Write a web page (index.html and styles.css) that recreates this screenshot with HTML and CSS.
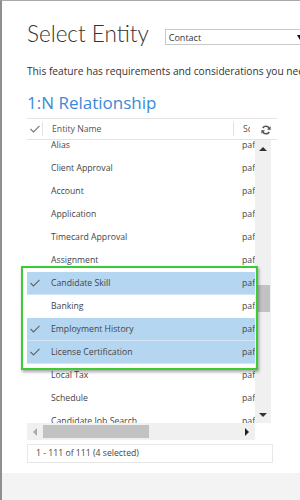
FILE: index.html
```html
<!DOCTYPE html>
<html lang="en">
<head>
  <meta charset="UTF-8">
  <meta name="viewport" content="width=device-width, initial-scale=1.0">
  <title>Select Entity</title>
  <link rel="stylesheet" href="styles.css">
</head>
<body>
  <div class="frame">
    <div class="page">
      <div class="title-row">
        <h1 class="title">Select Entity</h1>
        <div class="entity-select">
          <span>Contact</span>
          <span class="caret"></span>
        </div>
      </div>
      <p class="note">This feature has requirements and considerations you need to review before enabling it.</p>
      <h2 class="section">1:N Relationship</h2>

      <div class="grid">
        <div class="grid-head">
          <div class="cell-check">
            <svg width="10" height="8" viewBox="0 0 10 8"><polyline points="0.5,4 3.5,7 9.5,0.8" fill="none" stroke="#777" stroke-width="1.1"/></svg>
          </div>
          <div class="head-name">Entity Name</div>
          <div class="head-schema">Schema Name</div>
          <div class="head-refresh">
            <svg width="10" height="10" viewBox="0 0 10 10">
              <path d="M8.3 3.6 A3.6 3.6 0 0 0 1.8 3" fill="none" stroke="#555" stroke-width="1.5"/>
              <path d="M1.7 6.4 A3.6 3.6 0 0 0 8.2 7" fill="none" stroke="#555" stroke-width="1.5"/>
              <polygon points="9.6,1.2 9.6,5 5.9,4.4" fill="#555"/>
              <polygon points="0.4,8.8 0.4,5 4.1,5.6" fill="#555"/>
            </svg>
          </div>
        </div>

        <div class="grid-body">
          <div class="rows-view">
            <div class="rows">
              <div class="row"><div class="cell-check"></div><div class="cell-name">Alias</div><div class="cell-schema">paf_alias</div></div>
              <div class="row"><div class="cell-check"></div><div class="cell-name">Client Approval</div><div class="cell-schema">paf_clientapproval</div></div>
              <div class="row"><div class="cell-check"></div><div class="cell-name">Account</div><div class="cell-schema">paf_account</div></div>
              <div class="row"><div class="cell-check"></div><div class="cell-name">Application</div><div class="cell-schema">paf_application</div></div>
              <div class="row"><div class="cell-check"></div><div class="cell-name">Timecard Approval</div><div class="cell-schema">paf_timecardapproval</div></div>
              <div class="row"><div class="cell-check"></div><div class="cell-name">Assignment</div><div class="cell-schema">paf_assignment</div></div>
              <div class="row selected"><div class="cell-check"><svg width="10" height="8" viewBox="0 0 10 8"><polyline points="0.5,4 3.5,7 9.5,0.8" fill="none" stroke="#666" stroke-width="1.1"/></svg></div><div class="cell-name">Candidate Skill</div><div class="cell-schema">paf_candidateskill</div></div>
              <div class="row"><div class="cell-check"></div><div class="cell-name">Banking</div><div class="cell-schema">paf_banking</div></div>
              <div class="row selected"><div class="cell-check"><svg width="10" height="8" viewBox="0 0 10 8"><polyline points="0.5,4 3.5,7 9.5,0.8" fill="none" stroke="#666" stroke-width="1.1"/></svg></div><div class="cell-name">Employment History</div><div class="cell-schema">paf_employmenthistory</div></div>
              <div class="row selected"><div class="cell-check"><svg width="10" height="8" viewBox="0 0 10 8"><polyline points="0.5,4 3.5,7 9.5,0.8" fill="none" stroke="#666" stroke-width="1.1"/></svg></div><div class="cell-name">License Certification</div><div class="cell-schema">paf_licensecertification</div></div>
              <div class="row"><div class="cell-check"></div><div class="cell-name">Local Tax</div><div class="cell-schema">paf_localtax</div></div>
              <div class="row"><div class="cell-check"></div><div class="cell-name">Schedule</div><div class="cell-schema">paf_schedule</div></div>
              <div class="row"><div class="cell-check"></div><div class="cell-name">Candidate Job Search</div><div class="cell-schema">paf_candidatejobsearch</div></div>
            </div>
          </div>
          <div class="vscroll">
            <div class="scroll-btn"><span class="arrow-up"></span></div>
            <div class="vtrack"><div class="vthumb"></div></div>
            <div class="scroll-btn"><span class="arrow-down"></span></div>
          </div>
        </div>

        <div class="hscroll">
          <div class="hbtn"><span class="arrow-left"></span></div>
          <div class="htrack"><div class="hthumb"></div></div>
          <div class="hbtn"><span class="arrow-right"></span></div>
        </div>

        <div class="grid-foot">1 - 111 of 111 (4 selected)</div>
      </div>
    </div>
    <div class="bottom-bar"></div>
    <div class="callout"></div>
  </div>
</body>
</html>
```

FILE: styles.css
```css
html, body {
  margin: 0;
  height: 100%;
  overflow: hidden;
}
body {
  font-family: "Open Sans", "Noto Sans", sans-serif;
  color: #444;
  background: #fff;
}
.frame {
  position: relative;
  height: 499px;
  border-top: 1px solid #a9a9a9;
  border-left: 2px solid #8f8f8f;
  overflow: hidden;
}
.page {
  padding: 18px 0 0 25px;
  height: 454px;
}
.title-row {
  display: flex;
  align-items: flex-start;
  white-space: nowrap;
}
.title {
  margin: 0;
  font-family: Lato, "Open Sans", sans-serif;
  font-weight: 300;
  font-size: 22.5px;
  line-height: 30px;
  color: #333;
}
.entity-select {
  margin: 10px 0 0 16px;
  width: 136px;
  height: 14px;
  flex-shrink: 0;
  border: 1px solid #c9c9c9;
  border-right: none;
  display: flex;
  align-items: center;
  justify-content: space-between;
  padding-left: 3px;
  font-size: 9px;
  color: #333;
}
.caret {
  width: 0;
  height: 0;
  border-left: 3px solid transparent;
  border-right: 3px solid transparent;
  border-top: 5px solid #111;
  margin-right: 2px;
}
.note {
  margin: 15px 0 0;
  font-size: 10.2px;
  line-height: 14px;
  white-space: nowrap;
  color: #333;
}
.section {
  margin: 13px 0 0;
  font-weight: 400;
  font-size: 17px;
  line-height: 24px;
  color: #3a8ad8;
}
.grid {
  margin-top: 3px;
  width: 246px;
  font-size: 8.7px;
}
.grid-head {
  display: flex;
  align-items: center;
  height: 20px;
  width: 250px;
  border-top: 1px solid #e3e3e3;
  border-bottom: 1px solid #e3e3e3;
  color: #555;
}
.cell-check {
  width: 15px;
  flex-shrink: 0;
  display: flex;
  justify-content: center;
  align-items: center;
}
.head-name {
  width: 181px;
  height: 14px;
  padding-left: 9px;
  line-height: 14px;
  border-left: 1px solid #e3e3e3;
  border-right: 1px solid #e3e3e3;
}
.head-schema {
  width: 7px;
  padding-left: 9px;
  overflow: hidden;
  white-space: nowrap;
}
.head-refresh {
  margin-left: 7px;
  width: 18px;
  display: flex;
  justify-content: center;
  padding-top: 2px;
}
.grid-body {
  display: flex;
  height: 283px;
}
.rows-view {
  width: 228px;
  overflow: hidden;
}
.rows {
  margin-top: -6px;
}
.row {
  display: flex;
  align-items: center;
  height: 22px;
  border-bottom: 1px solid #fff;
  white-space: nowrap;
}
.row.selected {
  background: #b4d6f1;
  border-bottom-color: #d4e6f5;
}
.cell-name {
  width: 182px;
  flex-shrink: 0;
  padding-left: 9px;
}
.cell-schema {
  padding-left: 9px;
}
.vscroll {
  width: 16px;
  background: #f0f0f0;
  display: flex;
  flex-direction: column;
}
.scroll-btn {
  height: 17px;
  display: flex;
  align-items: center;
  justify-content: center;
}
.vtrack {
  flex: 1;
}
.vthumb {
  margin: 128px 0 0 2px;
  width: 13px;
  height: 27px;
  background: #c2c2c2;
}
.arrow-up, .arrow-down, .arrow-left, .arrow-right {
  width: 0;
  height: 0;
}
.arrow-up {
  border-left: 4px solid transparent;
  border-right: 4px solid transparent;
  border-bottom: 4px solid #333;
}
.arrow-down {
  border-left: 4px solid transparent;
  border-right: 4px solid transparent;
  border-top: 4px solid #333;
}
.arrow-left {
  border-top: 4px solid transparent;
  border-bottom: 4px solid transparent;
  border-right: 4px solid #aaa;
}
.arrow-right {
  border-top: 4px solid transparent;
  border-bottom: 4px solid transparent;
  border-left: 4px solid #222;
}
.hscroll {
  width: 228px;
  height: 17px;
  background: #f0f0f0;
  display: flex;
}
.hbtn {
  width: 16px;
  display: flex;
  align-items: center;
  justify-content: center;
}
.htrack {
  flex: 1;
  padding-top: 2px;
}
.hthumb {
  width: 106px;
  height: 13px;
  background: #c2c2c2;
}
.grid-foot {
  margin-top: 4px;
  height: 17px;
  border: 1px solid #e8e8e8;
  padding-left: 8px;
  line-height: 17px;
  color: #444;
}
.bottom-bar {
  height: 27px;
  background: #f3f3f3;
}
.callout {
  position: absolute;
  left: 19px;
  top: 265px;
  width: 237px;
  height: 104px;
  box-sizing: border-box;
  border: 2px solid #3bcb34;
  box-shadow: 1px 2px 3px rgba(0, 0, 0, 0.35);
}
```
